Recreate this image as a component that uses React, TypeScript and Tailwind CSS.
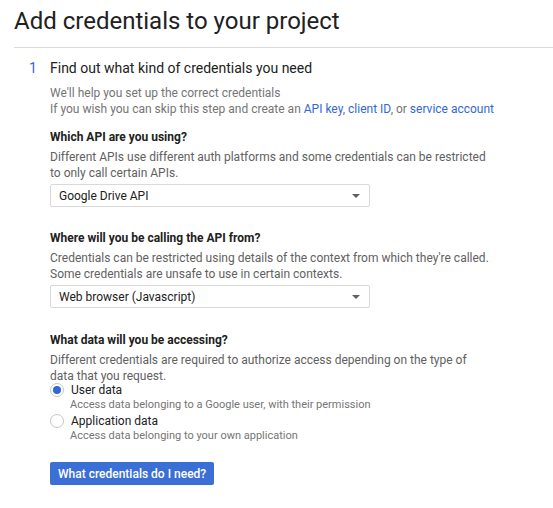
import { useState } from "react";

function Select({ value }: { value: string }) {
  return (
    <div className="mt-[3px] flex h-[23px] w-[320px] items-center justify-between rounded-[2px] border border-[#d9d9d9] bg-white pl-[8px] pr-[9px] text-[12px] text-[#212121]">
      <span>{value}</span>
      <span className="h-0 w-0 border-x-[4px] border-t-[4px] border-x-transparent border-t-[#616161]" />
    </div>
  );
}

function Radio({ checked, label, hint, onSelect }: { checked: boolean; label: string; hint: string; onSelect: () => void }) {
  return (
    <div className="cursor-pointer" onClick={onSelect}>
      <div className="flex h-[14px] items-center leading-[14px]">
        <span className="flex h-[14px] w-[14px] items-center justify-center rounded-full border border-[#c6c6c6] bg-white">
          {checked && <span className="h-[8px] w-[8px] rounded-full bg-[#3367d6]" />}
        </span>
        <span className="ml-[7px] text-[12px] text-[#212121]">{label}</span>
      </div>
      <div className="pl-[20px] text-[11px] leading-[15px] text-[#757575]">{hint}</div>
    </div>
  );
}

export default function App() {
  const [data, setData] = useState("user");

  return (
    <div className="min-h-screen bg-white pl-[14px] font-['Roboto',sans-serif]">
      <h1 className="pt-[5px] text-[24px] font-normal leading-[32px] text-[#212121]">
        Add credentials to your project
      </h1>
      <div className="mt-[10px] border-t border-[#dadada]" />

      <div className="mt-[10px] flex leading-[20px]">
        <span className="ml-[15px] w-[21px] text-[14px] text-[#3367d6]">1</span>
        <span className="text-[14px] text-[#212121]">Find out what kind of credentials you need</span>
      </div>

      <div className="pl-[36px] text-[12px] leading-[16px]">
        <div className="mt-[7px] text-[#757575]">
          <p>We'll help you set up the correct credentials</p>
          <p>
            If you wish you can skip this step and create an{" "}
            <a className="text-[#3367d6]">API key</a>,{" "}
            <a className="text-[#3367d6]">client ID</a>, or{" "}
            <a className="text-[#3367d6]">service account</a>
          </p>
        </div>

        <p className="mt-[12px] font-bold text-[#212121]">Which API are you using?</p>
        <p className="mt-[4px] w-[440px] text-[#616161]">
          Different APIs use different auth platforms and some credentials can be restricted to only call certain APIs.
        </p>
        <Select value="Google Drive API" />

        <p className="mt-[23px] font-bold text-[#212121]">Where will you be calling the API from?</p>
        <p className="mt-[4px] text-[#616161]">
          Credentials can be restricted using details of the context from which they're called.
          <br />
          Some credentials are unsafe to use in certain contexts.
        </p>
        <Select value="Web browser (Javascript)" />

        <p className="mt-[24px] font-bold text-[#212121]">What data will you be accessing?</p>
        <p className="mt-[4px] w-[440px] text-[#616161]">
          Different credentials are required to authorize access depending on the type of data that you request.
        </p>

        <div className="-mt-[1px]">
          <Radio
            checked={data === "user"}
            label="User data"
            hint="Access data belonging to a Google user, with their permission"
            onSelect={() => setData("user")}
          />
          <div className="mt-[2px]">
            <Radio
              checked={data === "app"}
              label="Application data"
              hint="Access data belonging to your own application"
              onSelect={() => setData("app")}
            />
          </div>
        </div>

        <button className="mt-[19px] h-[23px] rounded-[2px] bg-[#3b6fd6] px-[8px] text-[12px] font-medium text-white">
          What credentials do I need?
        </button>
      </div>
    </div>
  );
}
